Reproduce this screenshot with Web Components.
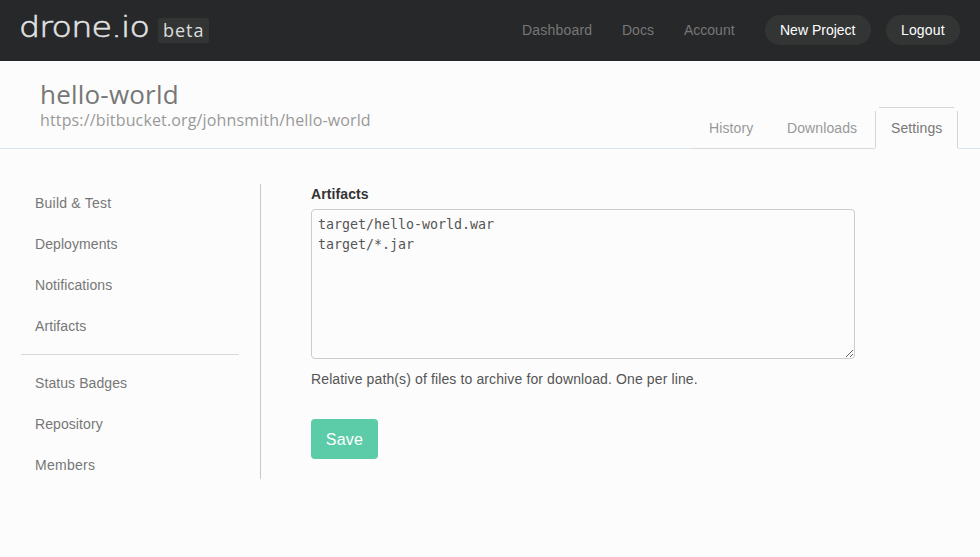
<!DOCTYPE html>
<html lang="en"><head><meta charset="utf-8"><title>hello-world settings</title>
<style>
html,body{margin:0;height:100%;background:#fcfcfc}
body{font:14px/20px "Liberation Sans",Arial,sans-serif;color:#555;overflow:hidden}
.content{display:flex;padding:35px 0 0 21px}
</style></head><body>
<site-header>
<nav-link style="--w:100px;letter-spacing:.2px">Dashboard</nav-link><nav-link style="--w:62px">Docs</nav-link><nav-link style="--w:81px">Account</nav-link><nav-link pill style="--w:106px">New Project</nav-link><nav-link pill style="--w:74px;letter-spacing:.15px">Logout</nav-link>
</site-header>
<project-header>
<span slot="name">hello-world</span><span slot="url">https://bitbucket.org/johnsmith/hello-world</span>
<project-tab style="--w:78px;letter-spacing:.1px">History</project-tab><project-tab style="--w:104px;letter-spacing:.1px">Downloads</project-tab><project-tab active style="--w:83px;letter-spacing:.1px">Settings</project-tab>
</project-header>
<div class="content">
<side-nav>
<side-item style="letter-spacing:.22px">Build &amp; Test</side-item><side-item>Deployments</side-item><side-item>Notifications</side-item><side-item>Artifacts</side-item>
<side-divider></side-divider>
<side-item>Status Badges</side-item><side-item>Repository</side-item><side-item style="letter-spacing:.28px">Members</side-item>
</side-nav>
<artifact-form></artifact-form>
</div>
<script>
function define(name, html){
  customElements.define(name, class extends HTMLElement{
    constructor(){ super(); this.attachShadow({mode:'open'}).innerHTML = html; }
  });
}
define('nav-link', `<style>
:host{display:block;box-sizing:border-box;width:var(--w);height:30px;line-height:30px;padding:0 15px;color:#777;white-space:nowrap}
:host([pill]){margin-left:15px;border-radius:15px;background:#333534;color:#fff}
</style><slot></slot>`);
define('site-header', `<style>
:host{display:flex;justify-content:space-between;height:61px;padding:0 20px;background:#27282a;box-sizing:border-box}
.brand{display:flex;align-items:flex-start}
.logo{width:138px;font:200 29px/32px "DejaVu Sans",sans-serif;letter-spacing:-.7px;color:#e2e2e2;padding-top:11px;white-space:nowrap;-webkit-text-stroke:.6px #e2e2e2}
.logo span{display:inline-block;transform:scaleX(1.15);transform-origin:0 0;margin-left:-1px}
.beta{width:51px;height:25px;margin-top:18px;border-radius:3px;background:#333534;color:#ddd;font:18px/25px "Open Sans",sans-serif;letter-spacing:1px;text-indent:5px}
nav{display:flex;padding-top:15px}
</style><div class="brand"><div class="logo"><span>drone.io</span></div><div class="beta">beta</div></div><nav><slot></slot></nav>`);
define('project-tab', `<style>
:host{display:block;box-sizing:border-box;width:var(--w);height:42px;padding:11px 0 0 16px;color:#999;border-bottom:1px solid #d9d9d9}
:host([active]){color:#777;border-bottom:0;background:
linear-gradient(#d5d5d5,#d5d5d5) 4px 0/75px 1px no-repeat,
linear-gradient(#d5d5d5,#d5d5d5) 0 4px/1px 37px no-repeat,
linear-gradient(#d5d5d5,#d5d5d5) 82px 4px/1px 37px no-repeat,#fcfcfc}
</style><slot></slot>`);
define('project-header', `<style>
:host{display:flex;justify-content:space-between;align-items:flex-end;height:88px;padding:0 22px 0 40px;box-sizing:border-box;
background:linear-gradient(#d0e5ec,#d0e5ec) 0 100%/100% 1px no-repeat}
.info{align-self:flex-start;padding-top:17px;font-family:"Open Sans",sans-serif}
.name{font-size:26px;line-height:32px;color:#777;letter-spacing:.2px}
.url{font-size:16px;line-height:20px;color:#999;letter-spacing:.145px}
.tabs{display:flex}
</style><div class="info"><div class="name"><slot name="name"></slot></div><div class="url"><slot name="url"></slot></div></div><div class="tabs"><slot></slot></div>`);
define('side-item', `<style>:host{display:block;height:41px;line-height:41px;padding-left:14px;color:#777;letter-spacing:.08px}</style><slot></slot>`);
define('side-divider', `<style>:host{display:block;height:1px;margin:7px 0 8px;background:#d9d9d9;width:218px}</style>`);
define('side-nav', `<style>:host{display:block;box-sizing:border-box;width:240px;height:295px;border-right:1px solid #c8c8c8}
div{margin-top:-1px;display:flow-root}</style><div><slot></slot></div>`);
define('artifact-form', `<style>
:host{display:flex;flex-direction:column;align-items:flex-start;margin-left:50px}
label{font-weight:bold;color:#333;margin-bottom:5px;letter-spacing:.1px}
textarea{display:block;box-sizing:border-box;width:544px;height:150px;margin:0;padding:5px 6px;border:1px solid #ccc;border-radius:4px;background:#fcfcfc;color:#555;font:13.3px/20px "DejaVu Sans Mono",monospace;resize:both;outline:0}
p{margin:10px 0 30px;letter-spacing:.122px}
button{width:67px;height:40px;border:0;padding:1px 0 0;border-radius:4px;background:#5bcca7;color:#fff;font:16px/39px "Liberation Sans",Arial,sans-serif;letter-spacing:.2px}
</style><label for="a">Artifacts</label><textarea id="a" spellcheck="false">target/hello-world.war
target/*.jar</textarea><p>Relative path(s) of files to archive for download. One per line.</p><button>Save</button>`);
</script></body></html>
